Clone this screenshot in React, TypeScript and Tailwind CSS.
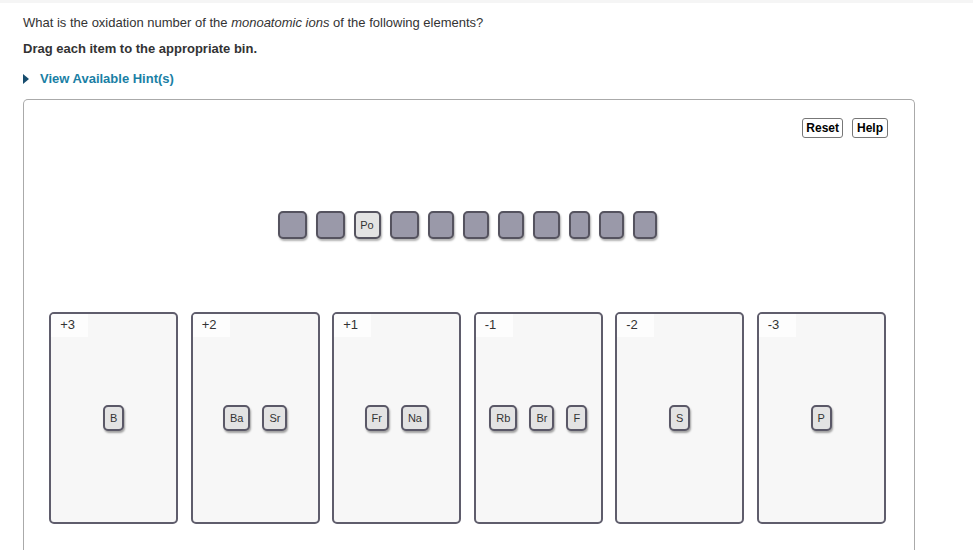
import * as React from "react"

const bins: { label: string; items: string[] }[] = [
  { label: "+3", items: ["B"] },
  { label: "+2", items: ["Ba", "Sr"] },
  { label: "+1", items: ["Fr", "Na"] },
  { label: "-1", items: ["Rb", "Br", "F"] },
  { label: "-2", items: ["S"] },
  { label: "-3", items: ["P"] },
]

// empty slots left in the source row; widths follow the items that were taken out
const slots: { label?: string; w: string }[] = [
  { w: "w-[29px]" },
  { w: "w-[29px]" },
  { label: "Po", w: "w-[27px]" },
  { w: "w-[29px]" },
  { w: "w-[26px]" },
  { w: "w-[26px]" },
  { w: "w-[26px]" },
  { w: "w-[27px]" },
  { w: "w-[21px]" },
  { w: "w-[25px]" },
  { w: "w-[24px]" },
]

function Item({ label }: { label: string }) {
  return (
    <div className="h-[26px] px-[5px] flex items-center justify-center border-2 border-[#5a5867] rounded-[5px] bg-[#e3e3e3] text-[11px] text-[#333] shadow-[1px_2px_2px_rgba(0,0,0,0.35)]">
      {label}
    </div>
  )
}

export default function App() {
  return (
    <div className="w-full h-[550px] overflow-hidden bg-white font-['Liberation_Sans',Arial,sans-serif] text-[#333]">
      <div className="h-[3px] bg-[#f5f5f5]" />

      <div className="pl-[23px]">
        <p className="mt-[11px] text-[13px] leading-[18px]">
          What is the oxidation number of the <i>monoatomic ions</i> of the following elements?
        </p>
        <p className="mt-[8px] text-[13px] leading-[18px] font-bold">
          Drag each item to the appropriate bin.
        </p>
        <div className="mt-[12px] flex items-center gap-[11px] text-[13px] leading-[18px] font-bold text-[#1a7fa5]">
          <svg width="6" height="10" viewBox="0 0 6 10" className="shrink-0">
            <path d="M0 0 L6 5 L0 10 Z" fill="#174d6e" />
          </svg>
          <span>View Available Hint(s)</span>
        </div>
      </div>

      {/* Drag & drop panel */}
      <div className="mt-[11px] ml-[23px] w-[892px] h-[460px] border border-b-0 border-[#aaa] rounded-t-[5px]">
        <div className="flex justify-end gap-[9px] pt-[18px] pr-[26px]">
          <button className="h-[20px] px-[3px] border border-[#777] rounded-[3px] bg-white text-[12px] font-bold text-black leading-none">
            Reset
          </button>
          <button className="h-[20px] px-[4px] border border-[#777] rounded-[3px] bg-white text-[12px] font-bold text-black leading-none">
            Help
          </button>
        </div>

        <div className="mt-[73px] pr-[4px] flex justify-center gap-[9px]">
          {slots.map((s, i) =>
            s.label ? (
              <div
                key={i}
                className={`${s.w} h-[28px] flex items-center justify-center border-2 border-[#55535f] rounded-[5px] bg-[#e3e3e3] text-[11px] text-[#333] shadow-[1px_2px_2px_rgba(0,0,0,0.3)]`}
              >
                {s.label}
              </div>
            ) : (
              <div
                key={i}
                className={`${s.w} h-[28px] border-2 border-[#55535f] rounded-[5px] bg-[#9a99a9] shadow-[1px_2px_2px_rgba(0,0,0,0.3)]`}
              />
            )
          )}
        </div>

        <div className="mt-[73px] pr-[3px] flex justify-center gap-[12.5px]">
          {bins.map((b) => (
            <div
              key={b.label}
              className="relative w-[129px] h-[212px] border-2 border-[#5f5d6c] rounded-[5px] bg-[#f7f7f7] flex items-center justify-center gap-[12px]"
            >
              <div className="absolute top-0 left-0 w-[37px] h-[23px] pl-[9px] pt-[3px] bg-[#fdfdfd] text-[13px] leading-[16px] text-[#333] rounded-tl-[3px]">
                {b.label}
              </div>
              {b.items.map((it) => (
                <Item key={it} label={it} />
              ))}
            </div>
          ))}
        </div>
      </div>
    </div>
  )
}
